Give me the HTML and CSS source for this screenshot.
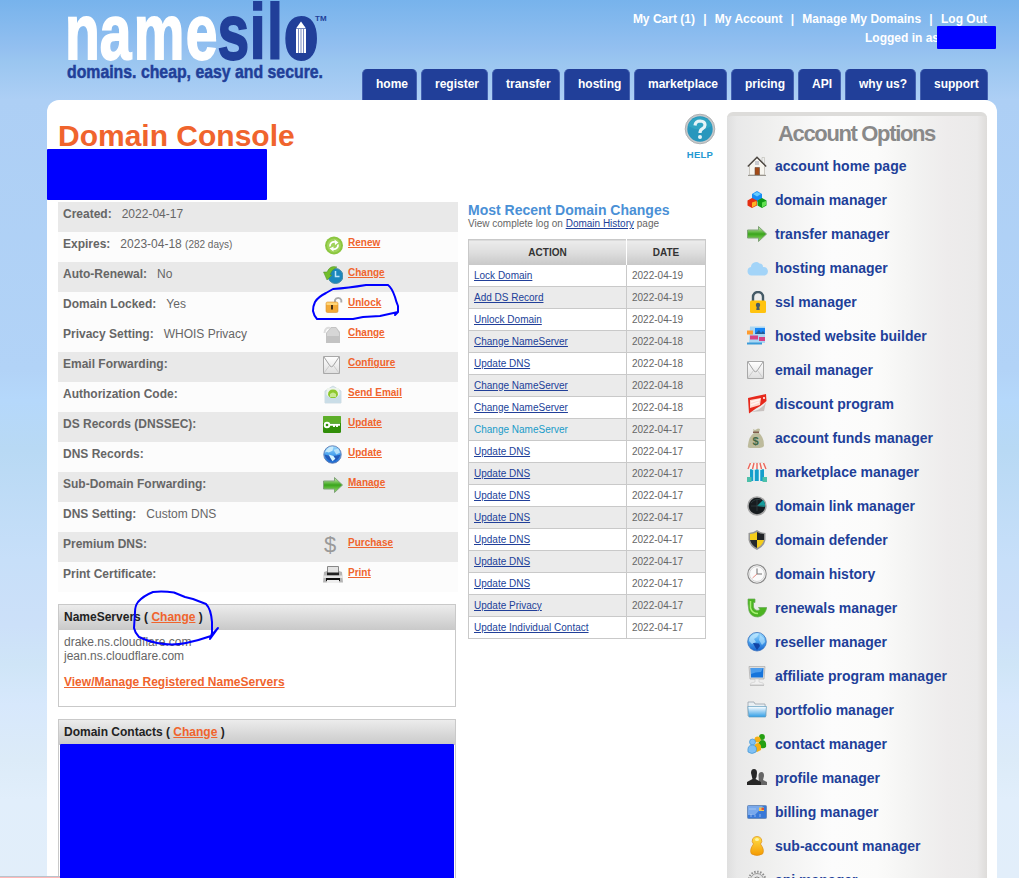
FILE: index.html
```html
<!DOCTYPE html>
<html lang="en">
<head>
<meta charset="utf-8">
<title>Domain Console</title>
<link rel="stylesheet" href="styles.css">
</head>
<body>
<svg class="defs" aria-hidden="true">
<defs>
<linearGradient id="gBlue" x1="0" y1="0" x2="0" y2="1"><stop offset="0" stop-color="#9fdcff"/><stop offset=".5" stop-color="#4aa3ee"/><stop offset="1" stop-color="#1763cf"/></linearGradient>
<linearGradient id="gGreen" x1="0" y1="0" x2="0" y2="1"><stop offset="0" stop-color="#d4f0b8"/><stop offset=".5" stop-color="#3aa51c"/><stop offset="1" stop-color="#9be070"/></linearGradient>
<linearGradient id="gGray" x1="0" y1="0" x2="0" y2="1"><stop offset="0" stop-color="#fff"/><stop offset="1" stop-color="#dedede"/></linearGradient>
<linearGradient id="gYellow" x1="0" y1="0" x2="0" y2="1"><stop offset="0" stop-color="#ffe04a"/><stop offset="1" stop-color="#f59a00"/></linearGradient>
<linearGradient id="gFolder" x1="0" y1="0" x2="0" y2="1"><stop offset="0" stop-color="#fff"/><stop offset="1" stop-color="#2f9de6"/></linearGradient>
<symbol id="i-arrow" viewBox="0 0 20 20"><path d="M.5 6H11.500V2.500L19.500 10L11.500 17.500V14H.5Z" fill="url(#gGreen)" stroke="#7fa377"/></symbol>
<symbol id="i-mail" viewBox="0 0 20 20"><path d="M.5 1.500H16.500V18.500H.5Z" fill="url(#gGray)" stroke="#a8a8a8"/><path d="M1 2L7 11Q8.500 12.500 10 11L16 2" fill="none" stroke="#999" stroke-width=".9"/><path d="M1 18L6.500 10.500M16 18L10.500 10.500" fill="none" stroke="#c4c4c4" stroke-width=".8"/></symbol>
<symbol id="i-globe" viewBox="0 0 20 20"><circle cx="10" cy="9.700" r="9.300" fill="url(#gBlue)" stroke="#3871bd" stroke-width=".8"/><path d="M2.500 6Q6 .8 12 1.500L10 5L7 7L9 10L5 12L2 9Z" fill="#d0f0ff" opacity=".6"/><path d="M13 3L17 6L18 10L15 13L12 8Z" fill="#c8ecff" opacity=".55"/><path d="M6 11L12 11.500L13 14L10 18L8 15Z" fill="#1144a6"/></symbol>
<symbol id="i-globe2" viewBox="0 0 20 20"><circle cx="10" cy="10" r="9.200" fill="url(#gBlue)" stroke="#6582b6"/><path d="M1.500 10Q10 13 18.500 10A8.700 8.700 0 0 1 1.500 10Z" fill="#1b49ac" opacity=".75"/><path d="M2 8Q5 1 11 2L10 6L6 8L4 7Z" fill="#c8ebfb"/><path d="M11 5L16 4L18 8L14 10Z" fill="#c8ebfb" opacity=".8"/><path d="M6 10L11 11.500L13 14.500L10 17L8 14Z" fill="#d6f5ff"/></symbol>
<symbol id="i-home" viewBox="0 0 20 20"><path d="M15 1.500H17.500V9H15Z" fill="#eee" stroke="#b9b9b0" stroke-width=".6"/><path d="M2.500 9L10 2L17.500 9V19H2.500Z" fill="#f7f5ef" stroke="#b9b5ac" stroke-width=".7"/><path d="M.8 10.500L10 1.200L19.200 10.500" fill="none" stroke="#4b4540" stroke-width="1.400"/><path d="M8 11.500H12.500V19H8Z" fill="#a34a16" stroke="#6b4a3a" stroke-width=".6"/><path d="M8 5H12V9H8Z" fill="#c9cbd0"/><path d="M1 19.400H19" stroke="#918d86"/></symbol>
<symbol id="i-cubes" viewBox="0 0 20 20"><path d="M10 1L15 4V9L10 12L5 9V4Z" fill="#178cf5"/><path d="M10 2L14 4L10 6.500L6 4Z" fill="#67cdff"/><path d="M5 8L10 10.500V15.500L5 18L.5 15.500V10.500Z" fill="#e52e12"/><path d="M5 12.500L9.500 11V15L5 17.500Z" fill="#ffb321"/><path d="M15 8L19.500 10.500V15.500L15 18L10.500 15.500V10.500Z" fill="#109c15"/><path d="M15 12.500L19 11V15L15 17.500Z" fill="#63e252"/></symbol>
<symbol id="i-cloud" viewBox="0 0 22 20"><path d="M4.500 17.500A4.300 4.300 0 0 1 4 9A5 5 0 0 1 12.500 5.500A3.500 3.500 0 0 1 16 9A4.400 4.400 0 0 1 18 17.500Z" fill="#a3d4f8"/></symbol>
<symbol id="i-lock" viewBox="0 0 20 22"><path d="M6 10V6A5 5 0 0 1 16 6V10" fill="none" stroke="#455a66" stroke-width="2.400"/><rect x="3" y="9.500" width="16" height="12.500" rx="1.500" fill="#ffc30f"/><circle cx="11" cy="14" r="2.200" fill="#455a66"/><path d="M10 14H12L12.700 19H9.300Z" fill="#455a66"/></symbol>
<symbol id="i-builder" viewBox="0 0 20 20"><path d="M3 .5H18V17H2Z" fill="#a9d7f4"/><path d="M8 2H18V8H8Z" fill="#1685f4"/><path d="M8 8L12 4L14 7L16 5L18 8Z" fill="#245b96"/><path d="M0 4.500H6V8.500H0Z" fill="#ff9c2f"/><path d="M3 9.500H11V13.500H3ZM12 11H18V15H12Z" fill="#d64285"/><path d="M0 16.500H15V18.500H0Z" fill="#3b9bd9"/></symbol>
<symbol id="i-discount" viewBox="0 0 20 20"><path d="M4 18Q15 16 19 8L17 17Z" fill="#c9c2c0"/><path d="M1 4Q9 2 19 0L19.500 7Q14 12 9 14.500L2 19.500Z" fill="#e6291c"/><path d="M3 6L14 4L13 11L3 14Z" fill="#ffd9d0"/><path d="M4 8L13 5.500M4 11L12 8" stroke="#fff5f0" stroke-width="1.500"/><circle cx="17" cy="4" r="1" fill="#fff"/></symbol>
<symbol id="i-money" viewBox="0 0 20 20"><path d="M6 1L8 2L11 .5L13 1L12 5Q17 9 17 18Q16 20 10 20H3Q0 20 1 17Q2 8 7 5Z" fill="#bdbb9c"/><path d="M6 3.500H12V5H6Z" fill="#805d4e"/><text x="5.500" y="16.500" class="money-sign">$</text></symbol>
<symbol id="i-market" viewBox="0 0 20 20"><path d="M3 7H17V19H3Z" fill="#159ecb"/><path d="M7 8V19M12.500 8V19" stroke="#e8f5f9" stroke-width="1.500"/><path d="M3 0H17L20 6Q19 9 16 7Q13 9 10 7Q7 9 4 7Q1 9 0 6Z" fill="#f8f3ee"/><path d="M4 0H16" stroke="#ccd5d8"/><path d="M3.500 1L1 7M7 1L5.500 7M10 1V7M13 1L14.500 7M16.500 1L19 7" stroke="#ea665c" stroke-width="1.400"/><path d="M0 15H4.500V20H0ZM15.500 15H20V20H15.500Z" fill="#4dc0a9"/></symbol>
<symbol id="i-radar" viewBox="0 0 20 20"><circle cx="10" cy="10" r="9" fill="#171c1f" stroke="#a4a4a4" stroke-width="1.500"/><path d="M10 10L16 4Q19 7 17.500 11Z" fill="#159c9c"/><path d="M4 7Q8 2 14 4M10 4V15M4 10H17" stroke="#3b4b4d" stroke-width=".6" fill="none"/></symbol>
<symbol id="i-shield" viewBox="0 0 20 20"><path d="M10 0Q14 3 18.500 3V10Q17 17 10 20Q3 17 1.500 10V3Q6 3 10 0Z" fill="#969696"/><path d="M10 2Q13 4 17 4V10H10Z" fill="#202326"/><path d="M10 2V10H3V4Q7 4 10 2ZM10 10H17Q15 16 10 18Z" fill="#f4cd1b"/><path d="M3 10H10V18Q5 16 3 10Z" fill="#25292d"/></symbol>
<symbol id="i-clock" viewBox="0 0 20 20"><circle cx="10" cy="10" r="9.200" fill="#fafafa" stroke="#888" stroke-width="1.100"/><circle cx="10" cy="10" r="7.500" fill="none" stroke="#ccc" stroke-width=".8"/><path d="M10 4.500V10H15" fill="none" stroke="#777" stroke-width="1.100"/><path d="M10 10L5.500 14" stroke="#e58f86"/></symbol>
<symbol id="i-renewal" viewBox="0 0 20 20"><path d="M1 1H8V4.500H6.500V9A4 4 0 0 0 13 11.500L11.500 9.500H19.800Q18 18 11 19Q4 19 2 13L1 6Z" fill="#4cb422" stroke="#68a958" stroke-width=".7"/><path d="M3.500 3V10Q5 15.500 11 15.500" fill="none" stroke="#a7ef73" stroke-width="1.500"/></symbol>
<symbol id="i-monitor" viewBox="0 0 20 20"><path d="M2 .5H18L17 13H3Z" fill="#ddd" stroke="#aaa" stroke-width=".7"/><path d="M3.500 2H16.500L16 11.500H4Z" fill="#1674db"/><path d="M4 2H16L14 6Q8 6 4 8Z" fill="#4b9cec"/><path d="M8 13H12V16L16 17L17 19H3L4 17L8 16Z" fill="#f0f0f0" stroke="#c4c4c4" stroke-width=".5"/><path d="M3 19.300H17" stroke="#bbb"/></symbol>
<symbol id="i-folder" viewBox="0 0 20 20"><path d="M1 16V2H7L8 4H18L19 16Z" fill="#e9eff3" stroke="#8c9aa3" stroke-width=".7"/><path d="M.8 6.500H19.500L18.500 17H2Z" fill="url(#gFolder)" stroke="#5f9dc2" stroke-width=".7"/></symbol>
<symbol id="i-contacts" viewBox="0 0 20 20"><g fill="#25a013"><circle cx="15" cy="3" r="2.900"/><path d="M11 13Q11 6 15 6Q20 6 19 13Q17 15 14 14Z"/></g><g fill="#f4af14"><circle cx="10.500" cy="5.500" r="3"/><path d="M6 16Q7 9 11 9Q15 10 14 16L10 18Z"/></g><g fill="#7fc0f5" stroke="#348dcc" stroke-width=".6"><circle cx="5.500" cy="8" r="3"/><path d="M1 18Q0 11 5.500 11Q11 12 9 18Q5 21 1 18Z"/></g></symbol>
<symbol id="i-profile" viewBox="0 0 20 20"><path d="M11.500 7Q12 4 14.500 4Q17 4 17 8L16 12L20 14V17H12Z" fill="#666"/><path d="M4 5Q4 1 7 1Q10 1 10 5Q10 9 8.500 11L14 14V17H0V14L5.500 11Z" fill="#272727"/></symbol>
<symbol id="i-billing" viewBox="0 0 20 20"><rect x=".5" y="3.500" width="19" height="13" rx="1" fill="#3979d8" stroke="#6f8fbc"/><path d="M1 4H16L8 13H1Z" fill="#79a9ec"/><path d="M12 5.500H17V9H12Z" fill="#f2c655"/><path d="M14.500 6H17V8H14.500Z" fill="#de5039"/><path d="M2 7H9M4 12V15M8 13V15M13 12V15" stroke="#bbd3f4" stroke-width=".7"/></symbol>
<symbol id="i-person" viewBox="0 0 20 20"><path d="M10 .5A4.400 4.400 0 0 1 13.500 8Q18 14 15.500 18Q10 21 4.500 18Q2 14 6.500 8A4.400 4.400 0 0 1 10 .5Z" fill="url(#gYellow)" stroke="#de8e16" stroke-width=".7"/><ellipse cx="10" cy="3.500" rx="2" ry="1.500" fill="#fff3a4"/></symbol>
<symbol id="i-gear" viewBox="0 0 20 20"><circle cx="10" cy="10" r="8.300" fill="none" stroke="#8e8e8e" stroke-width="2" stroke-dasharray="1.500 1.500"/><circle cx="10" cy="10" r="6.500" fill="#e4e4e4" stroke="#999"/><circle cx="10" cy="10" r="3" fill="#f8f8f8" stroke="#888"/></symbol>
<symbol id="i-renew" viewBox="0 0 20 20"><circle cx="11" cy="10.500" r="9" fill="#8bc63f"/><circle cx="11" cy="10.500" r="7" fill="#a0d35a"/><path d="M7 11.500A4 4 0 0 1 12 7M15 9.500A4 4 0 0 1 10 14" fill="none" stroke="#fff" stroke-width="1.800"/><path d="M11.500 4.500L15.500 7.500L12 10ZM10.500 11.500V16.500L6.500 13.500Z" fill="#fff"/></symbol>
<symbol id="i-auto" viewBox="0 0 20 20"><circle cx="12.500" cy="11" r="7.500" fill="#1b87bc" stroke="#4a8ca6"/><path d="M12.500 6V11.500H16.500" fill="none" stroke="#bee7fa" stroke-width="1.500"/><path d="M14 2Q7 0 4 7H.5L4 15L9 10H7Q8 5 14 2Z" fill="#72bd2a" stroke="#4f8f2c" stroke-width=".5"/></symbol>
<symbol id="i-unlock" viewBox="0 0 20 20"><path d="M12 7V5A3.400 3.400 0 0 1 18.300 5V7.500" fill="none" stroke="#aaa" stroke-width="1.900"/><rect x="3" y="7" width="12" height="10.500" rx="1.500" fill="#f3aa38" stroke="#d69032" stroke-width=".6"/><path d="M3.500 7.500H14.500V10H3.500Z" fill="#ffd579"/><path d="M8 10H10V14.500H8Z" fill="#453119"/></symbol>
<symbol id="i-privacy" viewBox="0 0 20 20"><path d="M3 18V8L8 2H13L17 7V18Z" fill="#c3c3c3"/><path d="M1.500 8Q2 2 7 3" fill="none" stroke="#ddd" stroke-width="2"/><path d="M4 8L8 3H13L16 8V11H4Z" fill="#d6d6d6"/></symbol>
<symbol id="i-send" viewBox="0 0 20 20"><path d="M2 6L10 1L18 6V18H2Z" fill="#dce9ee" stroke="#bfd0d8" stroke-width=".7"/><path d="M4 3H16V12H4Z" fill="#edf4ec"/><path d="M5 10Q5 4.500 10 4.500Q15 4.500 15 10L13 13H7Z" fill="#8dc82e"/><path d="M7 9Q10 6 13 9V12H7Z" fill="#c8e894"/><path d="M2 9L8 13H12L18 9V18H2Z" fill="#cadde7"/></symbol>
<symbol id="i-key" viewBox="0 0 20 20"><rect x="0" y="1" width="18" height="17" rx="1.500" fill="#318e09"/><path d="M0 2Q0 1 1 1H17Q18 1 18 2V8H0Z" fill="#5dae29"/><circle cx="4" cy="10" r="2.300" fill="none" stroke="#fff" stroke-width="1.900"/><path d="M6 9.800H17M11 10V12M14 10V12" stroke="#fff" stroke-width="1.900"/></symbol>
<symbol id="i-printer" viewBox="0 0 20 20"><path d="M4.500 1.500H15.500V10H4.500Z" fill="#e4e4e4" stroke="#888"/><path d="M1 7L4 6V10H16V6L19 7L20 17.500H0Z" fill="#b5b5b5"/><path d="M4 7.500H16V10.500H4Z" fill="#222"/><path d="M0 10.500H20V13H0Z" fill="#e4e4e4"/><path d="M3 13H17V16H3Z" fill="#111"/><path d="M4 15H16V18H4Z" fill="#eee"/></symbol>
</defs>
</svg>

<div class="page">
<header class="header">
  <svg class="logo" viewBox="0 0 270 84" role="img" aria-label="namesilo">
    <g transform="scale(.73 1)">
      <text class="logo-word logo-name" x="0 47.500 94.200 165.300" y="59">name</text>
      <text class="logo-word logo-silo" x="209 253 276.700 299.500" y="59">silo</text>
    </g>
    <rect x="228" y="27" width="16" height="25" rx="3" fill="#213f99"/>
    <path d="M231 53V28.500L236 21.500L241 28.500V53Z" fill="#fff"/><path d="M233.500 29V53M236 29V53M238.500 29V53M231 28.500H241" stroke="#213f99" stroke-width=".6"/>
    <text class="logo-tm" x="250" y="21">TM</text>
    <text class="logo-tag" x="2" y="77.500" textLength="256" lengthAdjust="spacingAndGlyphs">domains. cheap, easy and secure.</text>
  </svg>
  <div class="header-right">
    <div class="account"><a>My Cart (1)</a><i>|</i><a>My Account</a><i>|</i><a>Manage My Domains</a><i>|</i><a>Log Out</a></div>
    <div class="logged">Logged in as</div>
    <nav class="tabs"><a>home</a><a>register</a><a>transfer</a><a>hosting</a><a>marketplace</a><a>pricing</a><a>API</a><a>why us?</a><a>support</a></nav>
  </div>
</header>
<main class="card">
  <div class="main">
    <div class="title-row">
      <h1>Domain Console</h1>
      <div class="help"><svg width="32" height="32" viewBox="0 0 32 32"><circle cx="16" cy="16" r="14.800" fill="#c6c9cb" stroke="#aeb1b3"/><circle cx="16" cy="16" r="12.700" fill="#2897bd"/><path d="M4 13A12.500 12.500 0 0 1 28 13Q16 20 4 13Z" fill="#35aec5" opacity=".6"/><path d="M11 12.500Q11.500 8 16.200 8Q21 8.200 21 12Q21 14 18.500 15.700Q16 17 16 20" fill="none" stroke="#e5f4f7" stroke-width="3.200"/><circle cx="16" cy="24" r="2" fill="#e5f4f7"/></svg><span>HELP</span></div>
    </div>
    <div class="columns">
      <div class="left">
        <div class="details">
          <div class="row odd"><p><b>Created:</b>2022-04-17</p></div>
          <div class="row"><p><b>Expires:</b>2023-04-18 <small>(282 days)</small></p><svg class="ic"><use href="#i-renew"/></svg><a>Renew</a></div>
          <div class="row odd"><p><b>Auto-Renewal:</b>No</p><svg class="ic"><use href="#i-auto"/></svg><a>Change</a></div>
          <div class="row"><p><b>Domain Locked:</b>Yes</p><svg class="ic"><use href="#i-unlock"/></svg><a>Unlock</a></div>
          <div class="row"><p><b>Privacy Setting:</b>WHOIS Privacy</p><svg class="ic"><use href="#i-privacy"/></svg><a>Change</a></div>
          <div class="row odd"><p><b>Email Forwarding:</b></p><svg class="ic"><use href="#i-mail"/></svg><a>Configure</a></div>
          <div class="row"><p><b>Authorization Code:</b></p><svg class="ic"><use href="#i-send"/></svg><a>Send Email</a></div>
          <div class="row odd"><p><b>DS Records (DNSSEC):</b></p><svg class="ic"><use href="#i-key"/></svg><a>Update</a></div>
          <div class="row"><p><b>DNS Records:</b></p><svg class="ic ic-globe"><use href="#i-globe2"/></svg><a>Update</a></div>
          <div class="row odd"><p><b>Sub-Domain Forwarding:</b></p><svg class="ic"><use href="#i-arrow"/></svg><a>Manage</a></div>
          <div class="row"><p><b>DNS Setting:</b>Custom DNS</p></div>
          <div class="row odd"><p><b>Premium DNS:</b></p><span class="ic dollar">$</span><a>Purchase</a></div>
          <div class="row"><p><b>Print Certificate:</b></p><svg class="ic"><use href="#i-printer"/></svg><a>Print</a></div>
        </div>
        <section class="box servers"><h2>NameServers ( <a>Change</a> )</h2><div class="box-body">drake.ns.cloudflare.com<br>jean.ns.cloudflare.com<a>View/Manage Registered NameServers</a></div></section>
        <section class="box contacts"><h2>Domain Contacts ( <a>Change</a> )</h2><div class="contacts-cover"></div></section>
      </div>
      <div class="changes">
        <h3>Most Recent Domain Changes</h3>
        <p class="log">View complete log on <a>Domain History</a> page</p>
        <table>
          <thead><tr><th>ACTION</th><th>DATE</th></tr></thead>
          <tbody>
          <tr><td><a>Lock Domain</a></td><td>2022-04-19</td></tr>
          <tr><td><a>Add DS Record</a></td><td>2022-04-19</td></tr>
          <tr><td><a>Unlock Domain</a></td><td>2022-04-19</td></tr>
          <tr><td><a>Change NameServer</a></td><td>2022-04-18</td></tr>
          <tr><td><a>Update DNS</a></td><td>2022-04-18</td></tr>
          <tr><td><a>Change NameServer</a></td><td>2022-04-18</td></tr>
          <tr><td><a>Change NameServer</a></td><td>2022-04-18</td></tr>
          <tr><td><a class="hover">Change NameServer</a></td><td>2022-04-17</td></tr>
          <tr><td><a>Update DNS</a></td><td>2022-04-17</td></tr>
          <tr><td><a>Update DNS</a></td><td>2022-04-17</td></tr>
          <tr><td><a>Update DNS</a></td><td>2022-04-17</td></tr>
          <tr><td><a>Update DNS</a></td><td>2022-04-17</td></tr>
          <tr><td><a>Update DNS</a></td><td>2022-04-17</td></tr>
          <tr><td><a>Update DNS</a></td><td>2022-04-17</td></tr>
          <tr><td><a>Update DNS</a></td><td>2022-04-17</td></tr>
          <tr><td><a>Update Privacy</a></td><td>2022-04-17</td></tr>
          <tr><td><a>Update Individual Contact</a></td><td>2022-04-17</td></tr>
          </tbody>
        </table>
      </div>
    </div>
  </div>
  <aside class="side">
    <h2>Account Options</h2>
    <ul>
      <li><svg><use href="#i-home"/></svg>account home page</li>
      <li><svg><use href="#i-cubes"/></svg>domain manager</li>
      <li><svg><use href="#i-arrow"/></svg>transfer manager</li>
      <li><svg class="wide"><use href="#i-cloud"/></svg>hosting manager</li>
      <li><svg class="tall"><use href="#i-lock"/></svg>ssl manager</li>
      <li><svg><use href="#i-builder"/></svg>hosted website builder</li>
      <li><svg><use href="#i-mail"/></svg>email manager</li>
      <li><svg><use href="#i-discount"/></svg>discount program</li>
      <li><svg><use href="#i-money"/></svg>account funds manager</li>
      <li><svg><use href="#i-market"/></svg>marketplace manager</li>
      <li><svg><use href="#i-radar"/></svg>domain link manager</li>
      <li><svg><use href="#i-shield"/></svg>domain defender</li>
      <li><svg><use href="#i-clock"/></svg>domain history</li>
      <li><svg><use href="#i-renewal"/></svg>renewals manager</li>
      <li><svg><use href="#i-globe"/></svg>reseller manager</li>
      <li><svg><use href="#i-monitor"/></svg>affiliate program manager</li>
      <li><svg><use href="#i-folder"/></svg>portfolio manager</li>
      <li><svg><use href="#i-contacts"/></svg>contact manager</li>
      <li><svg><use href="#i-profile"/></svg>profile manager</li>
      <li><svg><use href="#i-billing"/></svg>billing manager</li>
      <li><svg><use href="#i-person"/></svg>sub-account manager</li>
      <li><svg><use href="#i-gear"/></svg>api manager</li>
    </ul>
  </aside>
</main>
<div class="cover cover-user"></div>
<div class="cover cover-domain"></div>
<svg class="marks" viewBox="0 0 1019 878">
  <path d="M388 285L366 285Q348 288 333 289L326 293Q318 297 315 302Q313 306 313 311Q314 316 317 319L353 319L363 317L380 316L398 312L395 315L398 312V306Q396 301 395 297Q392 288 388 285"/>
  <path d="M174 592.500Q163 591 153 592Q143 596 138 602Q135 606 135 612L134 628Q135 633 139 637Q147 641 157 643Q172 646 186 643Q200 640 211 636L218 628L210 639L212 633V622Q211 609 206 604L193 599L185 597Z"/>
</svg>
<div class="status"></div>
</div>
</body>
</html>
```
FILE: styles.css
```css
* { box-sizing: border-box; }
html, body { margin: 0; height: 878px; overflow: hidden; }
body { font-family: "Liberation Sans", Arial, sans-serif; font-size: 12px; color: #666; }
h1, h2, h3, p, ul { margin: 0; padding: 0; }
.defs { position: absolute; width: 0; height: 0; }
.page { position: relative; width: 1019px; height: 878px; overflow: hidden; background: linear-gradient(#77b3ec 0, #94c0f0 50px, #9ac6f0 62px, #adcff5 100px, #b2d3f7 370px, #b5d8fb 400px, #b8d9f4 450px, #c7dff9 560px, #cce0f9 625px, #cfe5f7 665px, #d7e8fc 705px, #dcebf8 760px, #e1eefb 800px, #e2eefa 878px); }

.header { display: flex; justify-content: space-between; width: 950px; height: 100px; margin-left: 47px; padding-right: 9px; }
.logo { width: 270px; height: 84px; margin-left: 18px; overflow: visible; }
.logo-word { font-size: 78px; font-weight: bold; stroke-width: 1.800px; }
.logo-name { fill: #fff; stroke: #fff; }
.logo-silo { fill: #213f99; stroke: #213f99; }
.logo-tm { font-size: 8px; font-weight: bold; fill: #213f99; }
.logo-tag { font-size: 18.500px; font-weight: bold; fill: #213f99; stroke: #213f99; stroke-width: .5px; }
.header-right { display: flex; flex-direction: column; align-items: flex-end; color: #fff; font-weight: bold; }
.account { display: flex; height: 29px; padding: 12px 1px 0 0; line-height: 14px; white-space: nowrap; }
.account i { font-style: normal; margin: 0 8.300px; }
.logged { height: 40px; padding: 2px 49px 0 0; line-height: 14px; }
.tabs { display: flex; gap: 4px; height: 31px; white-space: nowrap; }
.tabs a { width: 68px; padding: 8px 0 0 13px; line-height: 14px; background: #213f99; border: solid #4461b0; border-width: 0 1px; border-radius: 5px 5px 0 0; }
.tabs a:nth-child(1) { width: 55px; }
.tabs a:nth-child(2) { width: 67px; }
.tabs a:nth-child(4) { width: 66px; }
.tabs a:nth-child(5) { width: 93px; }
.tabs a:nth-child(6) { width: 63px; }
.tabs a:nth-child(7) { width: 43px; }
.tabs a:nth-child(8) { width: 71px; }

.card { display: flex; width: 950px; height: 790px; margin-left: 47px; padding: 12px 10px 0 11px; background: #fff; border-radius: 12px 12px 0 0; }
.main { width: 669px; }
.title-row { display: flex; justify-content: space-between; height: 90px; padding-right: 10px; }
h1 { padding-top: 7px; font-size: 30px; line-height: 34px; color: #f0642d; }
.help { display: flex; flex-direction: column; align-items: center; width: 34px; padding-top: 1px; font-size: 9.500px; font-weight: bold; line-height: 12px; letter-spacing: .3px; color: #2399d2; }
.help span { margin-top: 4px; }
.columns { display: flex; gap: 10px; }
.left { width: 400px; }
.row { display: flex; height: 30px; padding-left: 5px; background: #fcfcfc; }
.odd { background: #e9e9e9; }
.row p { width: 260px; padding-top: 5px; line-height: 14px; }
.row b { margin-right: 10px; }
.row small { font-size: 10px; }
.row .ic { width: 20px; height: 20px; margin: 3px 5px 0 0; }
.row .ic-globe { width: 19px; height: 19px; margin-right: 6px; }
.row .dollar { font-size: 22px; line-height: 20px; color: #999; padding-left: 1px; }
.row a { padding-top: 5px; font-size: 10px; line-height: 12px; }
.row a, .box a { color: #f0642d; font-weight: bold; text-decoration: underline; }
.box { width: 398px; margin-top: 12px; border: 1px solid #c9c9c9; }
.box h2 { height: 25px; padding: 5px; font-size: 12px; line-height: 14px; color: #222; background: linear-gradient(#ececec, #c9c9c9); }
.servers { height: 103px; }
.contacts { height: 180px; }
.contacts-cover { height: 155px; margin: -1px 1px 0; background: #00f; border-radius: 1px; }
.box-body { padding: 5px; line-height: 14px; }
.box-body a { display: block; margin-top: 12px; }
.changes { width: 238px; }
h3 { font-size: 14px; line-height: 16px; color: #4a90d6; white-space: nowrap; }
.log { height: 21px; font-size: 10px; line-height: 11px; }
.log a, td a { color: #213f99; text-decoration: underline; }
table { width: 237px; table-layout: fixed; border-collapse: collapse; font-size: 10px; }
th, td { border: 1px solid #c9c9c9; padding: 0 5px; line-height: 12px; }
th { width: 158px; height: 25px; padding-top: 1px; color: #333; background: linear-gradient(#ececec, #dedede 50%, #c9c9c9); border-bottom: 0; }
th:first-child { border-right-color: #fff; }
th + th { width: 79px; }
td { height: 22px; }
tbody tr:nth-child(even) { background: #ebebeb; }
td a.hover { color: #189bc9; text-decoration: none; }

.side { width: 260px; height: 780px; border-top: 4px solid #dddcda; border-radius: 6px 6px 0 0; background: linear-gradient(90deg, #dfdfdf 0, #e9e9e9 10px, #f0f0ef 45px, #fcfcfc 105px, #fbfbfa 150px, #f2f2f1 190px, #eeecec 220px, #ebeaea 250px, #dedcda 260px); }
.side h2 { height: 33px; padding: 5px 0 0 51px; font-size: 22px; line-height: 25px; letter-spacing: -1.350px; color: #898989; white-space: nowrap; }
.side ul { list-style: none; }
.side li { display: flex; align-items: center; height: 34px; padding-left: 20px; font-size: 14px; font-weight: bold; color: #213f99; }
.side svg { width: 20px; height: 20px; margin-right: 8px; }
.side .wide { width: 22px; margin-right: 6px; }
.side .tall { height: 22px; }
.money-sign { font-size: 11px; font-weight: bold; fill: #416846; }

.cover { position: absolute; background: #00f; border-radius: 1px; }
.cover-user { left: 937px; top: 26px; width: 59px; height: 23px; }
.cover-domain { left: 47px; top: 149px; width: 220px; height: 51px; }
.marks { position: absolute; left: 0; top: 0; width: 1019px; height: 878px; pointer-events: none; }
.marks path { fill: none; stroke: #00f; stroke-width: 2; stroke-linejoin: round; stroke-linecap: round; }
.status { position: absolute; left: 0; top: 876px; width: 60px; height: 2px; background: #ffb8b8; border-top: 1px solid #b9c3cc; }
```
